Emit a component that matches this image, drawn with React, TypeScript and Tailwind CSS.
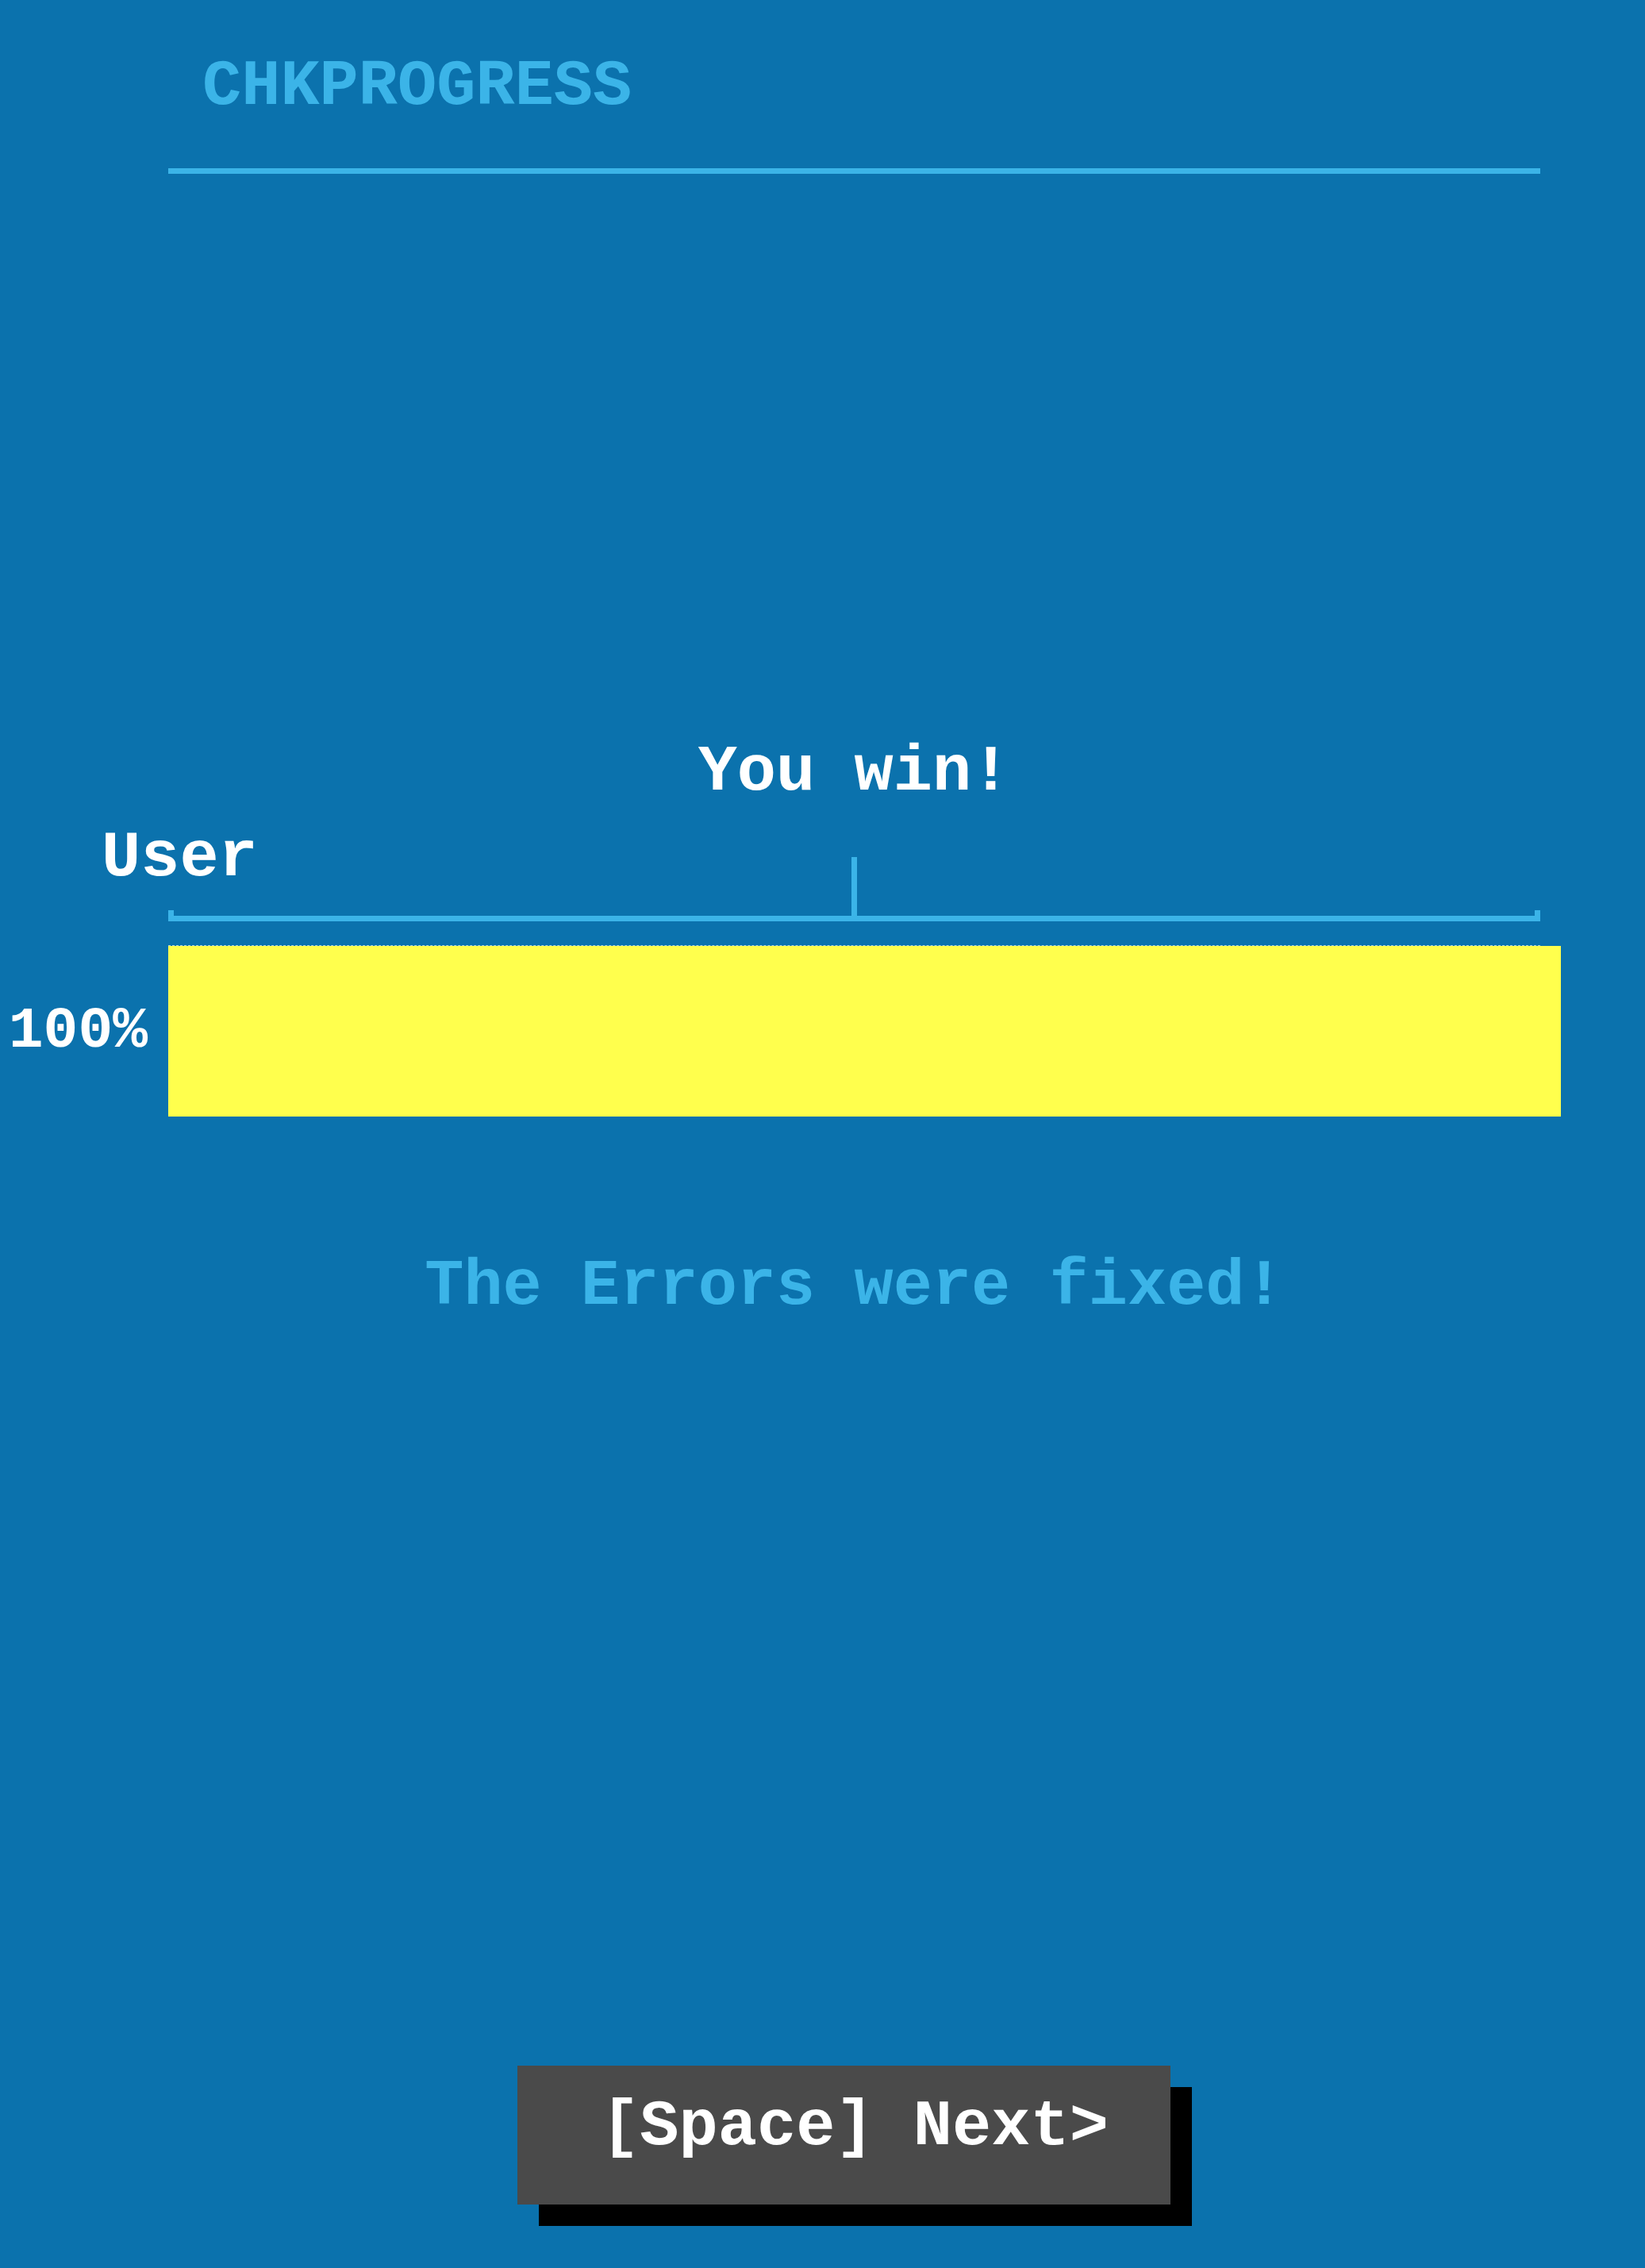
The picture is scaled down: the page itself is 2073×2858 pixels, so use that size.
import React from "react";

// Progress check result screen
const mono = "font-['Liberation_Mono','DejaVu_Sans_Mono',monospace] font-bold";

export default function App() {
  const percent = 100;

  return (
    <div className={`min-h-[2858px] w-full bg-[#0b72ad] ${mono} flex flex-col`}>
      {/* header */}
      <div className="ml-[212px] w-[1729px] pt-[69px] pb-[61px] border-b-[7px] border-[#3bb4e8]">
        <h1 className="pl-[43px] text-[82px] leading-none text-[#3bb4e8]">CHKPROGRESS</h1>
      </div>

      {/* result */}
      <div className="ml-[212px] w-[1729px] mt-[714px] text-center text-[82px] leading-none text-white">
        You win!
      </div>

      <div className="ml-[128px] mt-[26px] text-[82px] leading-none text-white">User</div>

      {/* ruler */}
      <div className="relative ml-[212px] mt-[24px] w-[1729px] h-[14px] border-x-[7px] border-b-[7px] border-[#3bb4e8]">
        <div className="absolute bottom-0 left-[calc(50%-3.5px)] w-[7px] h-[74px] bg-[#3bb4e8]" />
      </div>

      {/* bar */}
      <div className="mt-[30px] flex items-center">
        <div className="w-[212px] pr-[26px] text-right text-[73px] leading-none text-white">
          {percent}%
        </div>
        <div className="w-[1729px] border-t border-dashed border-[#a8cde0]">
          <div className="h-[215px] w-[1755px] bg-[#ffff4d]" />
        </div>
      </div>

      <div className="ml-[212px] w-[1729px] mt-[174px] text-center text-[82px] leading-none text-[#3bb4e8]">
        The Errors were fixed!
      </div>

      {/* next button */}
      <button className="ml-[652px] mt-[940px] w-[823px] h-[175px] bg-[#4a4a4a] shadow-[27px_27px_0_0_#000] flex justify-center items-start pt-[37px] pl-[27px] text-[82px] leading-none text-white">
        [Space] Next&gt;
      </button>
    </div>
  );
}
